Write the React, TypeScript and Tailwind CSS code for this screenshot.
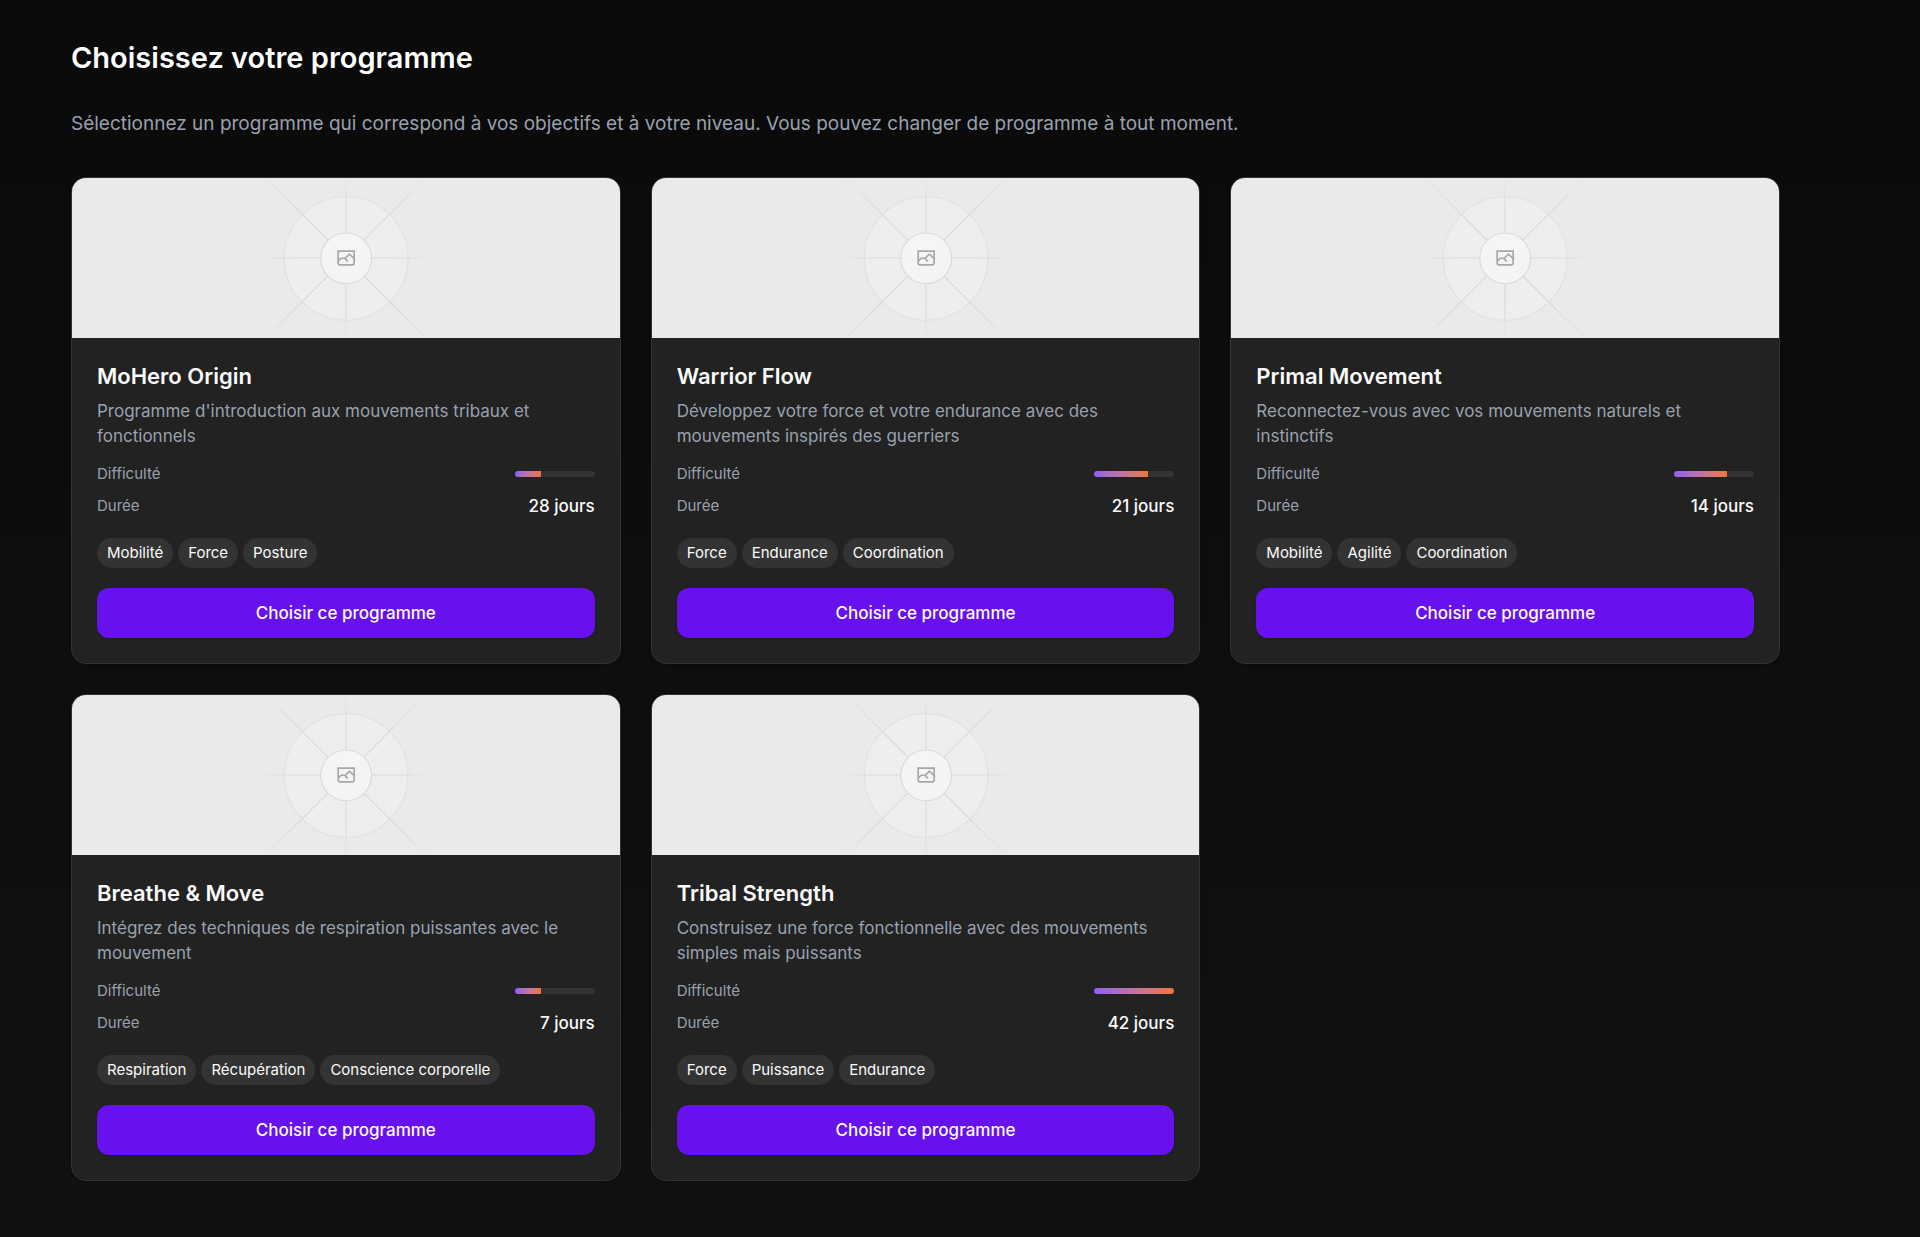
type Program = {
  name: string;
  description: string;
  level: number;
  days: number;
  tags: string[];
};

const programs: Program[] = [
  {
    name: "MoHero Origin",
    description: "Programme d'introduction aux mouvements tribaux et fonctionnels",
    level: 1,
    days: 28,
    tags: ["Mobilité", "Force", "Posture"],
  },
  {
    name: "Warrior Flow",
    description: "Développez votre force et votre endurance avec des mouvements inspirés des guerriers",
    level: 2,
    days: 21,
    tags: ["Force", "Endurance", "Coordination"],
  },
  {
    name: "Primal Movement",
    description: "Reconnectez-vous avec vos mouvements naturels et instinctifs",
    level: 2,
    days: 14,
    tags: ["Mobilité", "Agilité", "Coordination"],
  },
  {
    name: "Breathe & Move",
    description: "Intégrez des techniques de respiration puissantes avec le mouvement",
    level: 1,
    days: 7,
    tags: ["Respiration", "Récupération", "Conscience corporelle"],
  },
  {
    name: "Tribal Strength",
    description: "Construisez une force fonctionnelle avec des mouvements simples mais puissants",
    level: 3,
    days: 42,
    tags: ["Force", "Puissance", "Endurance"],
  },
];

function Placeholder({ id, label }: { id: string; label: string }) {
  const long = `${id}-long`;
  const short = `${id}-short`;
  return (
    <svg
      role="img"
      aria-label={label}
      className="block h-40 w-full bg-[#eaeaea]"
      viewBox="0 0 1200 1200"
      preserveAspectRatio="xMidYMid slice"
      fill="none"
    >
      <defs>
        <linearGradient id={long} gradientUnits="userSpaceOnUse" x1="335" y1="0" x2="865" y2="0">
          <stop stopColor="#C9C9C9" stopOpacity="0" />
          <stop offset=".208" stopColor="#C9C9C9" />
          <stop offset=".792" stopColor="#C9C9C9" />
          <stop offset="1" stopColor="#C9C9C9" stopOpacity="0" />
        </linearGradient>
        <linearGradient id={short} gradientUnits="userSpaceOnUse" x1="410" y1="0" x2="790" y2="0">
          <stop stopColor="#C9C9C9" stopOpacity="0" />
          <stop offset=".208" stopColor="#C9C9C9" />
          <stop offset=".792" stopColor="#C9C9C9" />
          <stop offset="1" stopColor="#C9C9C9" stopOpacity="0" />
        </linearGradient>
      </defs>
      <g opacity=".5">
        <circle cx="600.7" cy="600.9" r="135.4" fill="#FAFAFA" stroke="#C9C9C9" strokeWidth="2.418" opacity=".5" />
        <g strokeWidth="2.418">
          <path stroke={`url(#${long})`} d="M323 600H877" transform="rotate(45 600 600)" />
          <path stroke={`url(#${long})`} d="M323 600H877" transform="rotate(-45 600 600)" />
          <path stroke={`url(#${short})`} d="M398 600H802" />
          <path stroke={`url(#${short})`} d="M398 600H802" transform="rotate(90 600 600)" />
        </g>
        <circle cx="600.7" cy="600.9" r="56.8" fill="#fff" />
        <path
          fill="#666"
          fillRule="evenodd"
          clipRule="evenodd"
          d="M616.426 586.58h-31.434v16.176l3.553-3.554.531-.531h9.068l.074-.074 8.463-8.463h2.565l7.18 7.181V586.58Zm-15.715 14.654 3.698 3.699 1.283 1.282-2.565 2.565-1.282-1.283-5.2-5.199h-6.066l-5.514 5.514-.073.073v2.876a2.418 2.418 0 0 0 2.418 2.418h26.598a2.418 2.418 0 0 0 2.418-2.418v-8.317l-8.463-8.463-7.181 7.181-.071.072Zm-19.347 5.442v4.085a6.045 6.045 0 0 0 6.046 6.045h26.598a6.044 6.044 0 0 0 6.045-6.045v-7.108l1.356-1.355-1.282-1.283-.074-.073v-17.989h-38.689v23.43l-.146.146.146.147Z"
        />
        <circle cx="600.7" cy="600.9" r="55.6" stroke="#C9C9C9" strokeWidth="2.418" />
      </g>
    </svg>
  );
}

function ProgramCard({ program, id }: { program: Program; id: string }) {
  return (
    <article className="overflow-hidden rounded-[15px] border border-[#333] bg-[#222] shadow-sm">
      <Placeholder id={id} label={program.name} />
      <div className="p-[25px]">
        <h2 className="text-[22px] leading-[26px] font-semibold text-[#fafafa]">{program.name}</h2>
        <p className="mt-[10px] text-[17px] leading-[25px] text-gray-400">{program.description}</p>
        <div className="mt-3 flex h-[26px] items-center justify-between">
          <span className="text-[15px] leading-5 text-gray-400">Difficulté</span>
          <div
            role="meter"
            aria-label="Difficulté"
            aria-valuemin={0}
            aria-valuemax={3}
            aria-valuenow={program.level}
            className="h-[6px] w-20 overflow-hidden rounded-full bg-[#333]"
          >
            <div
              className="h-full bg-linear-to-r from-[#925cf0] to-[#f27430]"
              style={{ width: `${(program.level / 3) * 100}%` }}
            />
          </div>
        </div>
        <div className="mt-[6px] flex h-[26px] items-center justify-between">
          <span className="text-[15px] leading-5 text-gray-400">Durée</span>
          <span className="text-[17px] leading-[26px] font-medium text-[#fafafa]">{program.days} jours</span>
        </div>
        <ul className="mt-[19px] flex flex-wrap gap-[5px]">
          {program.tags.map((tag) => (
            <li key={tag} className="rounded-full bg-[#333] px-[10px] py-[5px] text-[15px] leading-5 text-[#fafafa]">
              {tag}
            </li>
          ))}
        </ul>
        <button
          type="button"
          className="mt-5 h-[50px] w-full rounded-xl bg-[#6611ee] text-[17px] leading-6 font-medium text-[#fafafa] shadow-sm"
        >
          Choisir ce programme
        </button>
      </div>
    </article>
  );
}

export default function App() {
  return (
    <main className="min-h-screen bg-linear-to-b from-[#0a0a0a] to-[#111] pt-10 pr-[140px] pb-14 pl-[71px] font-['Inter',sans-serif]">
      <h1 className="text-[29px] leading-9 font-semibold text-white">Choisissez votre programme</h1>
      <p className="mt-[33px] text-[19px] leading-[30px] text-gray-400">
        Sélectionnez un programme qui correspond à vos objectifs et à votre niveau. Vous pouvez changer de programme à
        tout moment.
      </p>
      <div className="mt-[38px] grid grid-cols-3 gap-[30px]">
        {programs.map((program, index) => (
          <ProgramCard key={program.name} program={program} id={`program-${index}`} />
        ))}
      </div>
    </main>
  );
}
